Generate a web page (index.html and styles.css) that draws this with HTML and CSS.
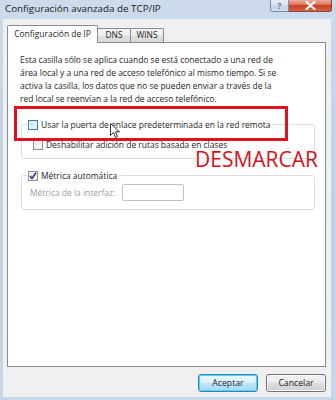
FILE: index.html
```html
<!DOCTYPE html>
<html lang="es">
<head>
<meta charset="utf-8">
<title>Configuración avanzada de TCP/IP</title>
<link rel="stylesheet" href="styles.css">
</head>
<body>
<div class="window">
  <div class="titlebar">
    <span class="title">Configuración avanzada de TCP/IP</span>
    <div class="caption-btns">
      <span class="cbtn help">?</span>
      <span class="cbtn close"><svg width="11" height="9" viewBox="0 0 11 9"><path d="M1.5 1 L9.5 8 M9.5 1 L1.5 8" stroke="#fff" stroke-width="2.2" stroke-linecap="round"/></svg></span>
    </div>
  </div>
  <div class="client">
    <div class="tabs">
      <span class="tab active">Configuración de IP</span>
      <span class="tab">DNS</span>
      <span class="tab">WINS</span>
    </div>
    <div class="panel">
      <p class="info">Esta casilla sólo se aplica cuando se está conectado a una red de<br>área local y a una red de acceso telefónico al mismo tiempo. Si se<br>activa la casilla, los datos que no se pueden enviar a través de la<br>red local se reenvían a la red de acceso telefónico.</p>
      <fieldset class="group g1">
        <legend><span class="cb hover"></span>Usar la puerta de enlace predeterminada en la red remota</legend>
        <div class="row"><span class="cb"></span>Deshabilitar adición de rutas basada en clases</div>
      </fieldset>
      <fieldset class="group g2">
        <legend><span class="cb checked"><svg width="8" height="8" viewBox="0 0 8 8"><path d="M1 4 L3 6.5 L7 0.8" fill="none" stroke="#1f3f7a" stroke-width="1.6"/></svg></span>Métrica automática</legend>
        <div class="row metric"><span class="lbl">Métrica de la interfaz:</span><span class="input"></span></div>
      </fieldset>
      <div class="highlight"></div>
      <div class="annot">DESMARCAR</div>
      <svg class="cursor" width="11" height="16" viewBox="0 0 11 16"><path d="M0.5 0.5 L0.5 12.5 L3.5 9.5 L5.5 14.5 L7.5 13.5 L5.5 8.8 L9.5 8.8 Z" fill="#fff" stroke="#333" stroke-width="1"/></svg>
    </div>
    <div class="actions">
      <span class="btn default">Aceptar</span>
      <span class="btn">Cancelar</span>
    </div>
  </div>
</div>
</body>
</html>
```
FILE: styles.css
```css
* { box-sizing: border-box; }
html, body { margin: 0; padding: 0; }
body {
  width: 335px;
  height: 400px;
  overflow: hidden;
  font-family: "Open Sans", "Noto Sans", sans-serif;
  color: #1e1e1e;
}
.window {
  width: 335px;
  height: 400px;
  display: flex;
  flex-direction: column;
  background: linear-gradient(180deg, #cddbeb 0%, #c4d4e7 30%, #bfd0e4 70%, #c8d7e8 100%);
}
.titlebar {
  height: 19px;
  flex: none;
  display: flex;
  align-items: flex-start;
  padding: 0 3px 0 5px;
}
.title {
  font-size: 9.8px;
  line-height: 17px;
  color: #1a1a1a;
}
.caption-btns {
  margin-left: auto;
  display: flex;
}
.cbtn {
  height: 12px;
  display: flex;
  align-items: center;
  justify-content: center;
  border: 1px solid #7a8ca3;
  border-top: none;
}
.help {
  width: 19px;
  border-radius: 0 0 0 3px;
  background: linear-gradient(180deg, #e6edf6 0%, #d3deec 50%, #c3d3e6 51%, #d3dfee 100%);
  color: #5a6c84;
  font-size: 8px;
  font-weight: bold;
  line-height: 10px;
}
.close {
  width: 43px;
  border-left: none;
  border-color: #8a4435;
  border-radius: 0 0 3px 0;
  background: linear-gradient(180deg, #eaac99 0%, #da735c 45%, #c83f24 50%, #d66242 100%);
}
.client {
  flex: 1;
  margin: 0 4px 3px 3px;
  background: #f0f0f0;
  padding: 6px 5px 5px 4px;
  display: flex;
  flex-direction: column;
  font-size: 8.45px;
}
.tabs {
  height: 17px;
  flex: none;
  display: flex;
  align-items: flex-end;
  position: relative;
  z-index: 2;
}
.tab {
  height: 14px;
  width: 34px;
  margin-left: -1px;
  border: 1px solid #898c95;
  border-bottom: none;
  background: linear-gradient(180deg, #f4f4f4 0%, #ececec 50%, #e0e0e0 51%, #d8d8d8 100%);
  line-height: 12px;
  text-align: center;
  border-radius: 2px 2px 0 0;
}
.tab.active {
  width: 91px;
  height: 18px;
  margin-left: 0;
  margin-bottom: -1px;
  background: #fff;
  line-height: 16px;
  position: relative;
  z-index: 3;
}
.panel {
  flex: none;
  height: 325px;
  border: 1px solid #898c95;
  background: #fff;
  position: relative;
  padding: 10px 10px 0 13px;
  line-height: 13px;
}
.info {
  margin: 0 0 13px -1px;
  white-space: nowrap;
}
.group {
  margin: 0;
  border: 1px solid #d5dfe5;
  border-radius: 3px;
  padding: 0;
  min-width: 0;
}
.group legend {
  margin-left: 5px;
  padding: 0 2px 0 1px;
  display: flex;
  align-items: center;
  line-height: 13px;
  white-space: nowrap;
}
.g1 { padding: 7px 0 7px 0; }
.g1 .row { margin-left: 11px; }
.g2 { margin-top: 10px; padding: 2px 0 8px 0; }
.g2 .row { margin-left: 8px; }
.row {
  display: flex;
  align-items: center;
  line-height: 13px;
  white-space: nowrap;
}
.cb {
  width: 10px;
  height: 10px;
  flex: none;
  margin-right: 3px;
  border: 1px solid #8e8f8f;
  background: linear-gradient(135deg, #dcdcdc 0%, #f4f4f4 60%, #ffffff 100%);
  box-shadow: inset 0 0 0 1px #f2f2f2;
  display: flex;
  align-items: center;
  justify-content: center;
}
.cb.hover {
  border-color: #3c7fb1;
  background: linear-gradient(135deg, #b9ddf6 0%, #def0fb 60%, #eef8fe 100%);
  box-shadow: inset 0 0 0 1px #e4f3fc;
}
.metric { gap: 7px; }
.lbl { color: #9d9d9d; }
.input {
  width: 62px;
  height: 17px;
  border: 1px solid #c3c3c3;
  border-radius: 2px;
  background: #fff;
}
.highlight {
  position: absolute;
  left: 6px;
  top: 63px;
  width: 274px;
  height: 35px;
  border: 3px solid #e0121f;
}
.annot {
  position: absolute;
  left: 187px;
  top: 108.8px;
  font-family: "Open Sans", sans-serif;
  font-size: 21px;
  line-height: 15px;
  color: #d5111d;
}
.cursor {
  position: absolute;
  left: 102px;
  top: 80px;
}
.actions {
  margin-top: 7px;
  display: flex;
  justify-content: flex-end;
  gap: 8px;
}
.btn {
  width: 60px;
  height: 18px;
  border: 1px solid #707070;
  border-radius: 3px;
  background: linear-gradient(180deg, #f2f2f2 0%, #ebebeb 50%, #dddddd 51%, #cfcfcf 100%);
  box-shadow: inset 0 0 0 1px #fbfbfb;
  font-size: 8.7px;
  line-height: 16px;
  text-align: center;
}
.btn.default {
  border-color: #3c7fb1;
  background: linear-gradient(180deg, #eaf6fd 0%, #d9f0fc 50%, #bee6fd 51%, #a7d9f5 100%);
  box-shadow: inset 0 0 0 1px #48d8fb;
}
```
